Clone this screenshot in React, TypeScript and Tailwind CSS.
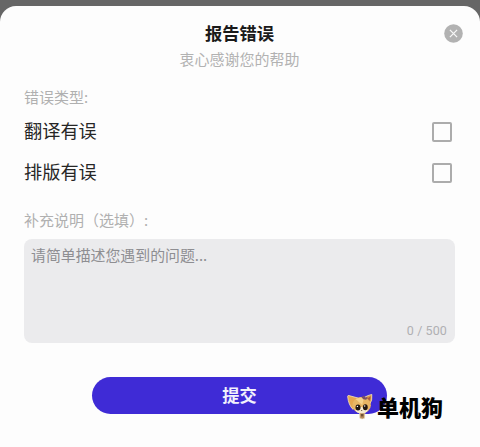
import { useState } from "react";

const errorTypes = ["翻译有误", "排版有误"];

const CloseIcon = () => (
  <svg className="block h-[19px] w-[19px]" viewBox="0 0 19 19" fill="none">
    <circle cx="9.5" cy="9.5" r="9.3" fill="#b2b2b2" />
    <path d="M5.9 5.9l7.2 7.2M13.1 5.9l-7.2 7.2" stroke="#f7f7f7" strokeWidth="1.3" />
  </svg>
);

const DogLogo = () => (
  <svg className="block h-[27px] w-[26px] shrink-0" viewBox="0 0 26 27" fill="none">
    {/* уши */}
    <path d="M.6 3.2Q.8 2.2 2 2.6L11 5 6 16.4Q1.4 12 .6 3.2Z" fill="#e7a64f" stroke="#f6e6b8" strokeWidth=".8" />
    <path d="M17 4.6Q21 2.2 24.8 1.4 26 7 21.8 13Z" fill="#dc9a49" stroke="#f6e6b8" strokeWidth=".8" />
    <path d="M20 5.8l3.6-2.6q.4 3-2.2 6z" fill="#a85a42" />
    {/* туловище */}
    <path d="M12.4 18h5.6l-.4 7.2q-2.4 1.6-4.8 0z" fill="#b98d5c" stroke="#efe2c8" strokeWidth=".6" />
    <path d="M14 21h2.4v2.4h-2.4z" fill="#6e5238" />
    {/* голова */}
    <ellipse cx="14.6" cy="12.2" rx="9.3" ry="8.1" fill="#e9b564" />
    <path d="M8.6 6Q13 3.4 17 5L15.2 12z" fill="#f6d28b" />
    <path d="M14.4 4l2.8-1.4 1 1.8 2.6-.4-1.6 2.8-3-.6z" fill="#76506a" />
    <ellipse cx="14.6" cy="17.2" rx="6" ry="3.1" fill="#f7ebd2" />
    <ellipse cx="11" cy="14.6" rx="2.5" ry="3" fill="#24170f" />
    <ellipse cx="18.3" cy="14.2" rx="2.4" ry="3" fill="#24170f" />
    <circle cx="10.4" cy="13.4" r=".7" fill="#fff" />
    <circle cx="17.7" cy="13" r=".7" fill="#fff" />
    <path d="M13.9 17h1.6l-.8.9z" fill="#392317" />
  </svg>
);

const App = () => {
  const [checked, setChecked] = useState<string[]>([]);
  const [text, setText] = useState("");

  const toggle = (type: string) => {
    setChecked((prev) =>
      prev.includes(type) ? prev.filter((t) => t !== type) : [...prev, type]
    );
  };

  return (
    <div className="h-[447px] w-[480px] overflow-hidden bg-[#666666] pt-[6px] font-['Noto_Sans_CJK_SC',sans-serif]">
      <div className="relative flex h-full flex-col rounded-t-[16px] bg-[#fdfdfd] pr-[25px] pl-6">
        <h1 className="mt-[15px] text-center text-[17.3px] leading-6 font-bold text-[#1a1a1a]">
          报告错误
        </h1>
        <p className="mt-[2px] text-center text-[15px] leading-6 text-[#b2b2b2]">衷心感谢您的帮助</p>
        <button className="absolute top-[18px] right-[17px] cursor-pointer" aria-label="关闭">
          <CloseIcon />
        </button>

        <p className="mt-[14px] text-[15px] leading-6 text-[#b0b0b0]">错误类型:</p>
        <div className="mt-[2px] flex flex-col">
          {errorTypes.map((type) => (
            <label key={type} className="flex h-[41px] items-center justify-between pr-[3px] text-[18.2px] text-[#262626]">
              <span className="pb-px">{type}</span>
              <input
                type="checkbox"
                checked={checked.includes(type)}
                onChange={() => toggle(type)}
                className="h-[20px] w-[20px] appearance-none rounded-[2px] border-2 border-[#acacac] checked:bg-[#3e2cd8]"
              />
            </label>
          ))}
        </div>

        <p className="mt-[15px] text-[15px] leading-6 text-[#b0b0b0]">补充说明（选填）:</p>
        <div className="mt-[7px] flex h-[104px] flex-col rounded-[8px] bg-[#ebebed] px-[7px] pt-[4px] pb-[4px]">
          <textarea
            value={text}
            maxLength={500}
            onChange={(e) => setText(e.target.value)}
            placeholder="请简单描述您遇到的问题..."
            className="block w-full flex-1 resize-none overflow-hidden text-[14.9px] leading-6 outline-none placeholder:text-[#8e8e92]"
          />
          <span className="pr-px text-right font-[Roboto,sans-serif] text-[12.5px] leading-4 tracking-[0.1px] text-[#b0b0b3]">
            {text.length} / 500
          </span>
        </div>

        <button className="mt-[34px] ml-[68px] h-[37px] w-[295px] cursor-pointer rounded-full bg-[#3f2bd6] pb-px text-[17.3px] leading-none font-bold text-[#f2f1fc]">
          提交
        </button>

        <div className="absolute top-[387px] left-[347px] flex items-center gap-[4px]">
          <DogLogo />
          <span className="-mt-[2px] text-[22px] leading-7 font-black whitespace-nowrap text-black">单机狗</span>
        </div>
      </div>
    </div>
  );
};

export default App;
